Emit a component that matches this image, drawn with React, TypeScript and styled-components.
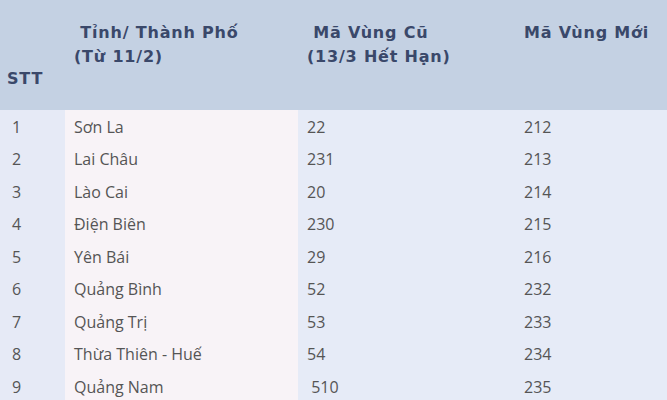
import React from "react";
import styled, { createGlobalStyle } from "styled-components";

const GlobalStyle = createGlobalStyle`
  html, body {
    margin: 0;
    padding: 0;
    background: #e6ebf7;
  }
`;

const Table = styled.div`
  display: grid;
  grid-template-columns: 65px 233px 217px 1fr;
  width: 667px;
`;

const HeadCell = styled.div<{ $bottom?: boolean }>`
  height: 110px;
  box-sizing: border-box;
  background: #c4d1e3;
  color: #3a486a;
  font-family: "DejaVu Sans", Verdana, sans-serif;
  font-weight: bold;
  font-size: 16px;
  letter-spacing: 0.8px;
  line-height: 24px;
  display: flex;
  flex-direction: column;
  justify-content: ${({ $bottom }) => ($bottom ? "flex-end" : "flex-start")};
  padding: ${({ $bottom }) => ($bottom ? "0 0 19px 7px" : "21px 0 0 9px")};
  white-space: pre;
`;

const Cell = styled.div<{ $tone: "side" | "name" | "code"; $pad?: number }>`
  height: 32.5px;
  display: flex;
  align-items: center;
  padding-left: ${({ $pad }) => $pad ?? 9}px;
  padding-top: 1px;
  box-sizing: border-box;
  font-family: "Open Sans", Tahoma, sans-serif;
  font-size: 16px;
  color: #555555;
  white-space: pre;
  background: ${({ $tone }) =>
    $tone === "side" ? "#e6eaf6" : $tone === "name" ? "#f8f3f7" : "#e6ebf7"};
`;

const rows: [string, string, string, string][] = [
  ["1", "Sơn La", "22", "212"],
  ["2", "Lai Châu", "231", "213"],
  ["3", "Lào Cai", "20", "214"],
  ["4", "Điện Biên", "230", "215"],
  ["5", "Yên Bái", "29", "216"],
  ["6", "Quảng Bình", "52", "232"],
  ["7", "Quảng Trị", "53", "233"],
  ["8", "Thừa Thiên - Huế", "54", "234"],
  ["9", "Quảng Nam", " 510", "235"],
];

export default function App() {
  return (
    <>
      <GlobalStyle />
      <Table>
        <HeadCell $bottom>STT</HeadCell>
        <HeadCell>
          <span> Tỉnh/ Thành Phố</span>
          <span>(Từ 11/2)</span>
        </HeadCell>
        <HeadCell>
          <span> Mã Vùng Cũ</span>
          <span>(13/3 Hết Hạn)</span>
        </HeadCell>
        <HeadCell>
          <span>Mã Vùng Mới</span>
        </HeadCell>
        {rows.map(([n, name, oldCode, newCode]) => (
          <React.Fragment key={n}>
            <Cell $tone="side" $pad={12}>{n}</Cell>
            <Cell $tone="name">{name}</Cell>
            <Cell $tone="code">{oldCode}</Cell>
            <Cell $tone="code">{newCode}</Cell>
          </React.Fragment>
        ))}
      </Table>
    </>
  );
}
